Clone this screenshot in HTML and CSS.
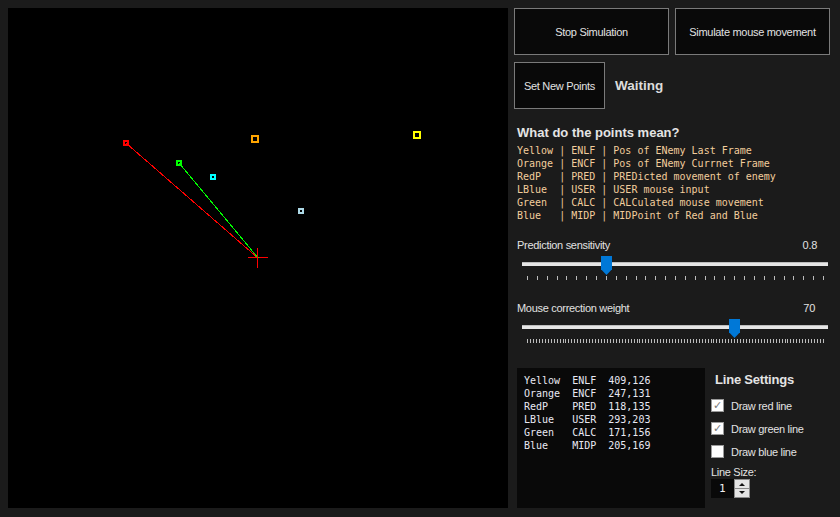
FILE: index.html
```html
<!DOCTYPE html>
<html>
<head>
<meta charset="utf-8">
<link rel="stylesheet" href="styles.css">
</head>
<body>
<div class="canvas">
  <svg width="500" height="500" viewBox="0 0 500 500" shape-rendering="crispEdges">
    <line x1="118.5" y1="135.5" x2="250.5" y2="250.5" stroke="#ff0000" stroke-width="1"/>
    <line x1="171.5" y1="155.5" x2="250.5" y2="250.5" stroke="#00ff00" stroke-width="1"/>
    <rect x="116" y="133" width="4" height="4" fill="none" stroke="#ff0000" stroke-width="2"/>
    <rect x="169" y="153" width="4" height="4" fill="none" stroke="#00ff00" stroke-width="2"/>
    <rect x="203" y="167" width="4" height="4" fill="none" stroke="#00ffff" stroke-width="2"/>
    <rect x="291" y="201" width="4" height="4" fill="none" stroke="#add8e6" stroke-width="2"/>
    <rect x="244" y="128" width="6" height="6" fill="none" stroke="#ffa500" stroke-width="2"/>
    <rect x="406" y="124" width="6" height="6" fill="none" stroke="#ffff00" stroke-width="2"/>
    <rect x="240" y="249" width="20" height="1" fill="#ff0000"/>
    <rect x="249" y="240" width="1" height="20" fill="#ff0000"/>
    <rect x="250" y="249" width="1" height="1" fill="#00ff00"/>
  </svg>
</div>
<div class="panel">
  <div class="row">
    <button class="btn btn-wide">Stop Simulation</button>
    <button class="btn btn-wide">Simulate mouse movement</button>
  </div>
  <div class="row row-status">
    <button class="btn btn-small">Set New Points</button>
    <span class="status">Waiting</span>
  </div>
  <div class="legend">
    <h3 class="heading">What do the points mean?</h3>
    <pre class="legend-text">Yellow | ENLF | Pos of ENemy Last Frame
Orange | ENCF | Pos of ENemy Currnet Frame
RedP   | PRED | PREDicted movement of enemy
LBlue  | USER | USER mouse input
Green  | CALC | CALCulated mouse movement
Blue   | MIDP | MIDPoint of Red and Blue</pre>
  </div>
  <div class="slider slider-first">
    <div class="slider-label"><span>Prediction sensitivity</span><span>0.8</span></div>
    <div class="slider-area">
      <div class="track"></div>
      <div class="thumb" style="left: 79px"></div>
    </div>
    <div class="ticks ticks-sparse"></div>
  </div>
  <div class="slider">
    <div class="slider-label"><span>Mouse correction weight</span><span class="val2">70</span></div>
    <div class="slider-area">
      <div class="track"></div>
      <div class="thumb" style="left: 207px"></div>
    </div>
    <div class="ticks ticks-dense"></div>
  </div>
  <div class="bottom">
    <pre class="data">Yellow  ENLF  409,126
Orange  ENCF  247,131
RedP    PRED  118,135
LBlue   USER  293,203
Green   CALC  171,156
Blue    MIDP  205,169</pre>
    <div class="line-settings">
      <h3 class="heading heading-ls">Line Settings</h3>
      <label class="check-row"><span class="box checked">✓</span>Draw red line</label>
      <label class="check-row"><span class="box checked">✓</span>Draw green line</label>
      <label class="check-row"><span class="box"></span>Draw blue line</label>
      <div class="size-label">Line Size:</div>
      <div class="numeric">
        <span class="num-value">1</span>
        <span class="spinner">
          <span class="spin spin-up"></span>
          <span class="spin spin-down"></span>
        </span>
      </div>
    </div>
  </div>
</div>
</body>
</html>
```

FILE: styles.css
```css
html, body {
  margin: 0;
  padding: 0;
}
body {
  background: #1b1b1b;
  padding: 8px;
  display: flex;
  gap: 6px;
  width: 840px;
  height: 517px;
  box-sizing: border-box;
  overflow: hidden;
  font-family: "Liberation Sans", Arial, sans-serif;
  font-size: 11px;
  letter-spacing: -0.3px;
  color: #e2e2e2;
}
.canvas {
  width: 500px;
  height: 500px;
  background: #000;
  flex: none;
}
.canvas svg {
  display: block;
}
.panel {
  width: 316px;
  flex: none;
  display: flex;
  flex-direction: column;
}
.row {
  display: flex;
  gap: 6px;
}
.row-status {
  margin-top: 7px;
  align-items: center;
  gap: 10px;
}
.btn {
  background: #090909;
  border: 1px solid #7a7a7a;
  color: #e2e2e2;
  font: inherit;
  letter-spacing: inherit;
  height: 47px;
  padding: 0;
  margin: 0;
}
.btn-wide {
  width: 155px;
}
.btn-small {
  width: 91px;
}
.status {
  font-weight: bold;
  font-size: 13.5px;
  letter-spacing: 0;
  color: #dcdcdc;
}
.legend {
  padding-left: 3px;
  margin-top: 15px;
}
.heading {
  margin: 0;
  font-weight: bold;
  font-size: 13px;
  letter-spacing: 0;
  line-height: 17px;
  color: #e4e4e4;
}
.heading-ls {
  letter-spacing: -0.2px;
}
.legend-text {
  margin: 3px 0 0 0;
  font-family: "DejaVu Sans Mono", monospace;
  font-size: 10px;
  letter-spacing: 0;
  line-height: 13px;
  color: #f2cd9c;
}
.slider {
  padding-left: 3px;
  width: 313px;
}
.slider-first {
  margin-top: 16px;
}
.slider + .slider {
  margin-top: 21px;
}
.slider-label {
  display: flex;
  justify-content: space-between;
  line-height: 14px;
  height: 14px;
  padding-right: 13px;
}
.val2 {
  margin-right: 2px;
}
.slider-area {
  position: relative;
  height: 19px;
  margin-top: 4px;
  margin-left: 5px;
  width: 306px;
}
.track {
  position: relative;
  top: 6px;
  height: 3px;
  background: #e6e6e6;
  border-top: 1px solid #bdbdbd;
}
.thumb {
  position: absolute;
  top: 0;
  width: 11px;
  height: 19px;
  background: #0078d7;
  clip-path: polygon(0 0, 100% 0, 100% 70%, 50% 100%, 0 70%);
}
.ticks {
  margin-top: 1px;
  margin-left: 10px;
  width: 297px;
  height: 4px;
}
.ticks-sparse {
  background: repeating-linear-gradient(90deg, #bdbdbd 0, #bdbdbd 1px, transparent 1px, transparent 9.8667px);
}
.ticks-dense {
  background: repeating-linear-gradient(90deg, #bdbdbd 0, #bdbdbd 1px, transparent 1px, transparent 2.96px);
}
.bottom {
  display: flex;
  margin-top: 25px;
  padding-left: 3px;
  gap: 6px;
}
.data {
  margin: 0;
  width: 188px;
  height: 140px;
  box-sizing: border-box;
  background: #090909;
  padding: 6px 0 0 7px;
  font-family: "DejaVu Sans Mono", monospace;
  font-size: 10px;
  letter-spacing: 0;
  line-height: 13px;
  color: #e8e8f2;
}
.line-settings {
  display: flex;
  flex-direction: column;
  padding-top: 3px;
}
.heading-ls {
  margin-left: 4px;
}
.check-row {
  display: flex;
  align-items: center;
  gap: 7px;
  height: 23px;
}
.line-settings .check-row:first-of-type {
  margin-top: 6px;
}
.box {
  width: 13px;
  height: 13px;
  box-sizing: border-box;
  background: #ffffff;
  border: 1px solid #9a9a9a;
  color: #7a7a7a;
  font-family: "DejaVu Sans", sans-serif;
  font-size: 11px;
  letter-spacing: 0;
  line-height: 11px;
  text-align: center;
}
.size-label {
  line-height: 14px;
  margin-top: 2px;
}
.numeric {
  display: flex;
  width: 39px;
  height: 19px;
}
.num-value {
  width: 23px;
  background: #090909;
  color: #f0f0f0;
  font-family: "DejaVu Sans Mono", monospace;
  font-size: 11px;
  letter-spacing: 0;
  line-height: 19px;
  padding-left: 8px;
  box-sizing: border-box;
}
.spinner {
  width: 16px;
  display: flex;
  flex-direction: column;
  background: #e4e4e4;
  border: 1px solid #8a8a8a;
  box-sizing: border-box;
}
.spin {
  flex: 1;
  position: relative;
}
.spin-up {
  border-bottom: 1px solid #8a8a8a;
}
.spin::after {
  content: "";
  position: absolute;
  left: 4px;
  top: 3px;
  border-left: 3px solid transparent;
  border-right: 3px solid transparent;
}
.spin-up::after {
  border-bottom: 3px solid #111;
}
.spin-down::after {
  top: 2px;
  border-top: 3px solid #111;
}
```
